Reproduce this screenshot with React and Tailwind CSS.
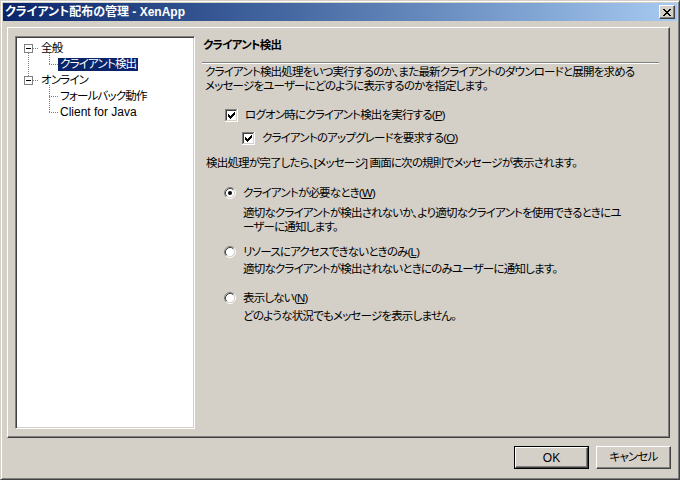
import React from 'react';

const FONT = "font-['Liberation_Sans','Noto_Sans_CJK_JP',sans-serif] [font-feature-settings:'palt']";

const dots = (list, fill) =>
  list.map(([x, y, w = 1, h = 1], i) => <rect key={fill + i} x={x} y={y} width={w} height={h} fill={fill} />);

// dotted tree connector pieces
const vDots = (x, y0, y1) => {
  const out = [];
  for (let y = y0; y < y1; y += 2) out.push([x, y]);
  return out;
};
const hDots = (y, x0, x1) => {
  const out = [];
  for (let x = x0; x < x1; x += 2) out.push([x, y]);
  return out;
};

const Checkbox = () => (
  <svg width="13" height="13" viewBox="0 0 13 13" shapeRendering="crispEdges" className="shrink-0">
    <rect width="13" height="13" fill="#fff" />
    {dots([[0, 0, 12, 1], [0, 0, 1, 12]], '#808080')}
    {dots([[1, 1, 10, 1], [1, 1, 1, 10]], '#404040')}
    {dots([[1, 11, 11, 1], [11, 1, 1, 11]], '#d4d0c8')}
    {dots([[3, 5, 1, 3], [4, 6, 1, 3], [5, 7, 1, 3], [6, 6, 1, 3], [7, 5, 1, 3], [8, 4, 1, 3], [9, 3, 1, 3]], '#000')}
  </svg>
);

const Radio = ({ on }) => (
  <svg width="12" height="12" viewBox="0 0 12 12" className="shrink-0">
    <circle cx="6" cy="6" r="4.5" fill="#fff" />
    <path d="M2.11 9.89A5.5 5.5 0 0 1 9.89 2.11" fill="none" stroke="#808080" />
    <path d="M9.89 2.11A5.5 5.5 0 0 1 2.11 9.89" fill="none" stroke="#fff" />
    <path d="M2.82 9.18A4.5 4.5 0 0 1 9.18 2.82" fill="none" stroke="#404040" />
    <path d="M9.18 2.82A4.5 4.5 0 0 1 2.82 9.18" fill="none" stroke="#d4d0c8" />
    {on && <circle cx="6" cy="6" r="2" fill="#000" />}
  </svg>
);

const Key = ({ k }) => (
  <span>(<span className="underline">{k}</span>)</span>
);

const MinusBox = () => (
  <>
    <rect x="7.5" y="4.5" width="8" height="8" fill="#fff" stroke="#808080" />
    <rect x="9" y="8" width="5" height="1" fill="#000" />
  </>
);

const TreeRow = ({ kind, label, selected, latin }) => {
  const parent = kind === 'root1' || kind === 'root2';
  const w = parent ? 22 : 41;
  let pieces = [];
  if (kind === 'root1') pieces = [...hDots(8, 16, 22), ...vDots(11, 13, 16), ...vDots(32, 13, 16)];
  if (kind === 'root2') pieces = [...hDots(8, 16, 22), ...vDots(11, 1, 4), ...vDots(32, 13, 16)];
  if (kind === 'mid') pieces = [...vDots(11, 1, 16), ...vDots(32, 1, 8), ...hDots(8, 32, 41)];
  if (kind === 'child') pieces = [...vDots(32, 1, 16), ...hDots(8, 32, 41)];
  if (kind === 'last') pieces = [...vDots(32, 1, 8), ...hDots(8, 32, 41)];
  return (
    <div className="flex items-center h-[16px]">
      <svg width={w} height="16" viewBox={`0 0 ${w} 16`} shapeRendering="crispEdges" className="shrink-0 overflow-visible">
        {dots(pieces, '#808080')}
        {parent && <MinusBox />}
      </svg>
      <span className={`px-[2px] h-[13px] leading-[13px] whitespace-nowrap ${latin ? 'text-[12px] tracking-normal' : ''} ${selected ? 'bg-[#0a246a] text-white' : 'text-black'}`}>
        {label}
      </span>
    </div>
  );
};

const raised = 'border border-t-white border-l-white border-r-[#404040] border-b-[#404040] shadow-[inset_-1px_-1px_#808080]';

const CloseGlyph = () => (
  <svg width="8" height="7" viewBox="0 0 8 7" shapeRendering="crispEdges">
    {dots([[0, 0, 2, 1], [6, 0, 2, 1], [1, 1, 2, 1], [5, 1, 2, 1], [2, 2, 4, 1], [3, 3, 2, 1], [2, 4, 4, 1], [1, 5, 2, 1], [5, 5, 2, 1], [0, 6, 2, 1], [6, 6, 2, 1]], '#000')}
  </svg>
);

export default function App() {
  return (
    <div className={`${FONT} w-[680px] h-[480px] bg-[#d4d0c8] text-[11.5px] tracking-[-0.8px] text-black border border-[#d4d0c8] border-r-[#404040] border-b-[#404040] p-[2px] shadow-[inset_1px_1px_#fff,inset_-1px_-1px_#808080] flex flex-col`}>
      {/* title bar */}
      <div className="h-[18px] flex items-center justify-between bg-gradient-to-r from-[#0a246a] to-[#a6caf0] pl-[2px] pr-[2px]">
        <span className="text-white text-[12px] tracking-normal font-bold leading-[18px] whitespace-nowrap">クライアント配布の管理 - XenApp</span>
        <div className={`${raised} bg-[#d4d0c8] w-[16px] h-[14px] flex items-center justify-center`}>
          <CloseGlyph />
        </div>
      </div>

      {/* main panel */}
      <div className={`${raised} mt-[6px] ml-[4px] w-[663px] h-[411px] flex pl-[7px] pt-[8px]`}>
        <div className="w-[180px] h-[393px] bg-white border border-t-[#808080] border-l-[#808080] border-r-white border-b-white shadow-[inset_1px_1px_#404040,inset_-1px_-1px_#d4d0c8] pt-[3px] pl-[1px] shrink-0">
          <TreeRow kind="root1" label="全般" />
          <TreeRow kind="mid" label="クライアント検出" selected />
          <TreeRow kind="root2" label="オンライン" />
          <TreeRow kind="child" label="フォールバック動作" />
          <TreeRow kind="last" label="Client for Java" latin />
        </div>

        <div className="ml-[6px] flex flex-col leading-[14px]">
          <div className="mt-[2px] pl-[2px] h-[14px] font-bold whitespace-nowrap">クライアント検出</div>
          <div className="mt-[10px] ml-[1px] w-[457px] h-[2px] border-t border-t-[#808080] border-b border-b-white" />
          <div className="mt-[1px] pl-[4px] whitespace-nowrap">
            クライアント検出処理をいつ実行するのか、また最新クライアントのダウンロードと展開を求める
            <br />
            メッセージをユーザーにどのように表示するのかを指定します。
          </div>

          <div className="mt-[15px] ml-[24px] h-[14px] flex items-center">
            <Checkbox />
            <span className="ml-[7px] whitespace-nowrap">ログオン時にクライアント検出を実行する<Key k="P" /></span>
          </div>
          <div className="mt-[9px] ml-[41px] h-[14px] flex items-center">
            <Checkbox />
            <span className="ml-[7px] whitespace-nowrap">クライアントのアップグレードを要求する<Key k="O" /></span>
          </div>

          <div className="mt-[11px] pl-[5px] whitespace-nowrap">検出処理が完了したら、[メッセージ] 画面に次の規則でメッセージが表示されます。</div>

          <div className="mt-[16px] ml-[23px] h-[14px] flex items-center">
            <Radio on />
            <span className="ml-[7px] whitespace-nowrap">クライアントが必要なとき<Key k="W" /></span>
          </div>
          <div className="mt-[6px] ml-[42px] whitespace-nowrap">
            適切なクライアントが検出されないか、より適切なクライアントを使用できるときにユ
            <br />
            ーザーに通知します。
          </div>

          <div className="mt-[11px] ml-[23px] h-[14px] flex items-center">
            <Radio />
            <span className="ml-[7px] whitespace-nowrap">リソースにアクセスできないときのみ<Key k="L" /></span>
          </div>
          <div className="mt-[3px] ml-[42px] whitespace-nowrap">適切なクライアントが検出されないときにのみユーザーに通知します。</div>

          <div className="mt-[15px] ml-[23px] h-[14px] flex items-center">
            <Radio />
            <span className="ml-[7px] whitespace-nowrap">表示しない<Key k="N" /></span>
          </div>
          <div className="mt-[4px] ml-[42px] whitespace-nowrap">どのような状況でもメッセージを表示しません。</div>
        </div>
      </div>

      {/* buttons */}
      <div className="mt-[8px] flex justify-end gap-[7px] pr-[6px]">
        <div className="w-[75px] h-[23px] border border-black">
          <div className={`${raised} w-full h-full flex items-center justify-center text-[12px] tracking-normal`}>OK</div>
        </div>
        <div className={`${raised} w-[75px] h-[23px] flex items-center justify-center`}>キャンセル</div>
      </div>
    </div>
  );
}
